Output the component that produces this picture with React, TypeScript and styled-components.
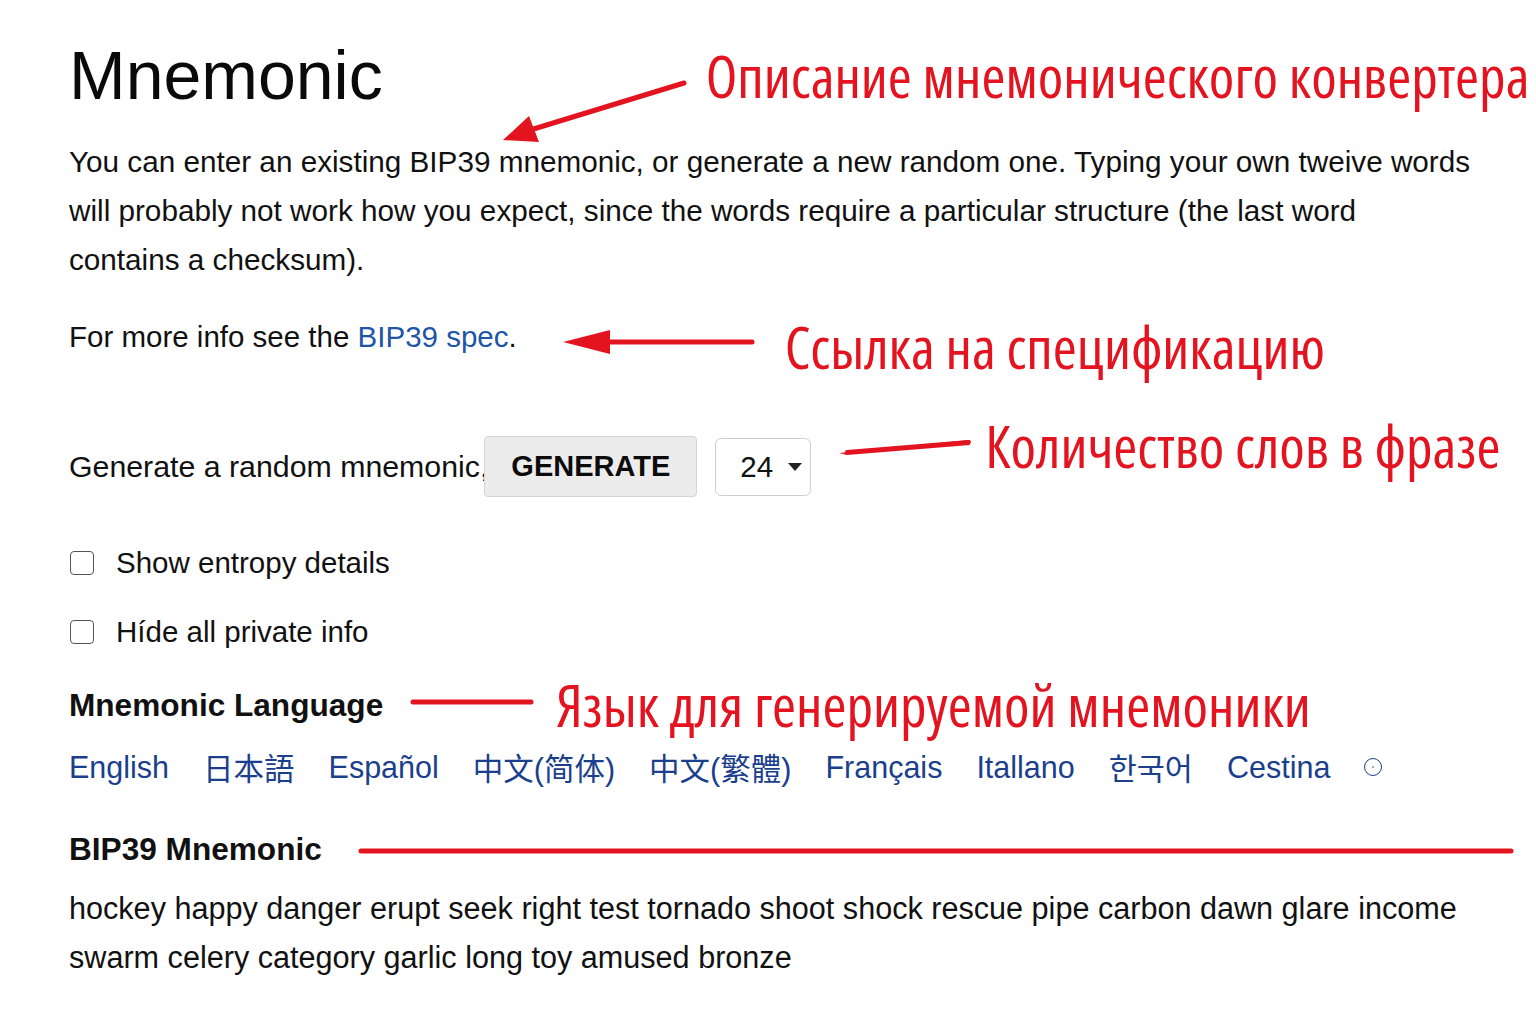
import styled, { createGlobalStyle } from "styled-components";

const GlobalStyle = createGlobalStyle`
  html, body {
    margin: 0;
    padding: 0;
    background: #ffffff;
    overflow: hidden;
  }
  body {
    font-family: "Liberation Sans", Arial, sans-serif;
    color: #111111;
  }
`;

const RED = "#e3141f";

const Page = styled.div`
  width: 1536px;
  height: 1024px;
  padding-left: 69px;
  box-sizing: border-box;
  overflow: hidden;
`;

const Row = styled.div<{ $top: number; $height: number }>`
  position: relative;
  display: flex;
  align-items: center;
  margin-top: ${(p) => p.$top}px;
  height: ${(p) => p.$height}px;
  white-space: nowrap;

  & > * {
    flex-shrink: 0;
  }
`;

const Title = styled.h1`
  margin: 0;
  font-size: 68px;
  font-weight: 400;
  line-height: 70px;
  color: #0a0a0a;
`;

const Note = styled.span<{ $left: number; $dy?: number }>`
  margin-left: ${(p) => p.$left}px;
  position: relative;
  top: ${(p) => p.$dy ?? 0}px;
  font-family: "Open Sans", "Noto Sans", sans-serif;
  font-stretch: 80%;
  font-size: 58px;
  line-height: 64px;
  color: ${RED};
  white-space: nowrap;
`;

const Paragraph = styled.p<{ $top: number; $size: number }>`
  margin: ${(p) => p.$top}px 0 0;
  width: 1440px;
  font-size: ${(p) => p.$size}px;
  line-height: 49px;
`;

const Text = styled.span<{ $size?: number }>`
  font-size: ${(p) => p.$size ?? 29.5}px;
`;

const Link = styled.a`
  color: #1f55a6;
  text-decoration: none;
`;

const Label = styled.span`
  font-size: 31.6px;
  font-weight: 700;
`;

const GenerateButton = styled.button`
  margin-left: -4px;
  height: 61px;
  padding: 0 26px;
  background: #ececec;
  border: 1px solid #d4d4d4;
  border-radius: 4px;
  font-family: "Liberation Sans", Arial, sans-serif;
  font-size: 29px;
  font-weight: 700;
  color: #0c0c0c;
  cursor: pointer;
`;

const SelectBox = styled.div`
  margin-left: 18px;
  width: 96px;
  height: 58px;
  box-sizing: border-box;
  border: 1px solid #cfcfcf;
  border-radius: 6px;
  display: flex;
  align-items: center;
  padding-left: 24px;
  gap: 15px;
  font-size: 29.5px;
`;

const Check = styled.input.attrs({ type: "checkbox" })`
  appearance: none;
  margin: 0 22px 0 1px;
  width: 24px;
  height: 24px;
  border: 1.5px solid #555;
  border-radius: 4px;
  box-sizing: border-box;
`;

const LangList = styled.div`
  display: flex;
  align-items: center;
  gap: 34px;
  font-family: "Liberation Sans", "Noto Sans CJK SC", "Noto Sans CJK KR", sans-serif;
  font-size: 30.5px;
`;

const LangLink = styled.a`
  color: #1b3f8d;
  text-decoration: none;
`;

const Circle = styled.span`
  display: inline-flex;
  align-items: center;
  justify-content: center;
  width: 18px;
  height: 18px;
  border: 1.5px solid #1b3f8d;
  border-radius: 50%;
  box-sizing: border-box;
  &::after {
    content: "";
    width: 2px;
    height: 2px;
    border-radius: 50%;
    background: #7d8fb8;
  }
`;

const Overlay = styled.svg`
  position: absolute;
  pointer-events: none;
`;

const languages = [
  "English",
  "日本語",
  "Español",
  "中文(简体)",
  "中文(繁體)",
  "Français",
  "Itallano",
  "한국어",
  "Cestina",
];

const App = () => {
  return (
    <>
      <GlobalStyle />
      <Page>
        <Row $top={40} $height={70}>
          <Title>Mnemonic</Title>
          <Note $left={323} $dy={1}>
            Описание мнемонического конвертера
          </Note>
          <Overlay width={200} height={70} viewBox="0 0 200 70" style={{ left: 430, top: 38 }}>
            <line x1={185} y1={5} x2={28} y2={53} stroke={RED} strokeWidth={5} strokeLinecap="round" />
            <polygon points="4,62 30,38 40,64" fill={RED} />
          </Overlay>
        </Row>

        <Paragraph $top={27} $size={29.7}>
          You can enter an existing BIP39 mnemonic, or generate a new random one. Typing your own tweive words
          <br />
          will probably not work how you expect, since the words require a particular structure (the last word
          <br />
          contains a checksum).
        </Paragraph>

        <Row $top={28} $height={49}>
          <Text>
            For more info see the <Link href="#">BIP39 spec</Link>.
          </Text>
          <svg width={194} height={28} viewBox="0 0 194 28" style={{ marginLeft: 45, marginTop: 10 }}>
            <line x1={40} y1={14} x2={190} y2={14} stroke={RED} strokeWidth={5} strokeLinecap="round" />
            <polygon points="1,14 48,2 48,26" fill={RED} />
          </svg>
          <Note $left={29} $dy={10}>
            Ссылка на спецификацию
          </Note>
        </Row>

        <Row $top={75} $height={61}>
          <Text $size={30.3}>Generate a random mnemonic,</Text>
          <GenerateButton>GENERATE</GenerateButton>
          <SelectBox>
            <span>24</span>
            <svg width={14} height={8} viewBox="0 0 14 8">
              <polygon points="0,0 14,0 7,8" fill="#222" />
            </svg>
          </SelectBox>
          <svg width={136} height={20} viewBox="0 0 136 20" style={{ marginLeft: 26, marginTop: -40 }}>
            <path d="M2 16 L132 3 L133 8 L10 18 Z" fill={RED} />
            <line x1={10} y1={15} x2={132} y2={5} stroke={RED} strokeWidth={4} strokeLinecap="round" />
          </svg>
          <Note $left={12} $dy={-21}>
            Количество слов в фразе
          </Note>
        </Row>

        <Row $top={46} $height={40}>
          <Check />
          <Text>Show entropy details</Text>
        </Row>

        <Row $top={29} $height={40}>
          <Check />
          <Text>Híde all private info</Text>
        </Row>

        <Row $top={33} $height={40}>
          <Label>Mnemonic Language</Label>
          <svg width={124} height={10} viewBox="0 0 124 10" style={{ marginLeft: 27, marginTop: -6 }}>
            <line x1={3} y1={5} x2={121} y2={5} stroke={RED} strokeWidth={5} strokeLinecap="round" />
          </svg>
          <Note $left={22}>Язык для генерируемой мнемоники</Note>
        </Row>

        <Row $top={22} $height={40}>
          <LangList>
            {languages.map((lang) => (
              <LangLink key={lang} href="#">
                {lang}
              </LangLink>
            ))}
            <Circle />
          </LangList>
        </Row>

        <Row $top={42} $height={40}>
          <Label>BIP39 Mnemonic</Label>
          <svg width={1156} height={10} viewBox="0 0 1156 10" style={{ marginLeft: 36, marginTop: 4 }}>
            <line x1={3} y1={5} x2={1153} y2={5} stroke={RED} strokeWidth={5} strokeLinecap="round" />
          </svg>
        </Row>

        <Paragraph $top={15} $size={30.6}>
          hockey happy danger erupt seek right test tornado shoot shock rescue pipe carbon dawn glare income
          <br />
          swarm celery category garlic long toy amused bronze
        </Paragraph>
      </Page>
    </>
  );
};

export default App;
